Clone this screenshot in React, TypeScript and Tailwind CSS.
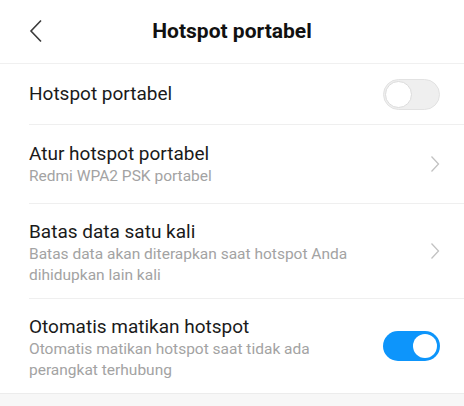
import React from "react";

function Toggle({ on }: { on: boolean }) {
  return on ? (
    <div className="flex h-[30px] w-[57px] shrink-0 items-center justify-end rounded-full bg-[#0d95fb] pr-[3px]">
      <div className="h-[24px] w-[24px] rounded-full bg-white" />
    </div>
  ) : (
    <div className="flex h-[31px] w-[57px] shrink-0 items-center rounded-full border border-[#e2e2e2] bg-[#efefef] pl-[1px]">
      <div className="h-[27px] w-[27px] rounded-full border border-[#dcdcdc] bg-white" />
    </div>
  );
}

function Chevron() {
  return (
    <svg width="10" height="18" viewBox="0 0 10 18" className="mr-[24px] shrink-0">
      <path d="M1.5 1.5 L8.5 9 L1.5 16.5" fill="none" stroke="#c2c2c2" strokeWidth="1.3" />
    </svg>
  );
}

export default function App() {
  return (
    <div
      className="flex h-[406px] w-[464px] flex-col overflow-hidden bg-white"
      style={{ fontFamily: "Roboto, 'Noto Sans', sans-serif" }}
    >
      <div className="relative flex h-[64px] shrink-0 items-center justify-center border-b border-[#f0f0f0]">
        <svg width="14" height="24" viewBox="0 0 14 24" className="absolute left-[29px] top-[19px]">
          <path d="M12 1.5 L2 12 L12 22.5" fill="none" stroke="#3a3a3a" strokeWidth="1.6" />
        </svg>
        <div className="text-[21px] font-bold text-[#111]">Hotspot portabel</div>
      </div>

      <div className="flex flex-col pl-[29px]">
        <div className="flex h-[61px] items-center justify-between border-b border-[#efefef] pr-[24px]">
          <div className="text-[19px] text-[#1a1a1a]">Hotspot portabel</div>
          <Toggle on={false} />
        </div>

        <div className="flex h-[79px] items-center justify-between border-b border-[#efefef]">
          <div className="flex flex-col">
            <div className="text-[19px] leading-[25px] text-[#1a1a1a]">Atur hotspot portabel</div>
            <div className="text-[15.5px] leading-[21px] text-[#a3a3a3]">Redmi WPA2 PSK portabel</div>
          </div>
          <Chevron />
        </div>

        <div className="flex h-[95px] items-center justify-between border-b border-[#efefef]">
          <div className="flex w-[340px] flex-col pt-[2px]">
            <div className="text-[19px] leading-[25px] text-[#1a1a1a]">Batas data satu kali</div>
            <div className="text-[15.5px] leading-[21px] text-[#a3a3a3]">
              Batas data akan diterapkan saat hotspot Anda dihidupkan lain kali
            </div>
          </div>
          <Chevron />
        </div>

        <div className="flex h-[94px] items-center justify-between pr-[24px]">
          <div className="flex w-[340px] flex-col pt-[2px]">
            <div className="text-[19px] leading-[25px] text-[#1a1a1a]">Otomatis matikan hotspot</div>
            <div className="text-[15.5px] leading-[21px] text-[#a3a3a3]">
              Otomatis matikan hotspot saat tidak ada perangkat terhubung
            </div>
          </div>
          <Toggle on={true} />
        </div>
      </div>

      <div className="flex-1 border-t border-[#ececec] bg-[#f7f7f7]" />
    </div>
  );
}
